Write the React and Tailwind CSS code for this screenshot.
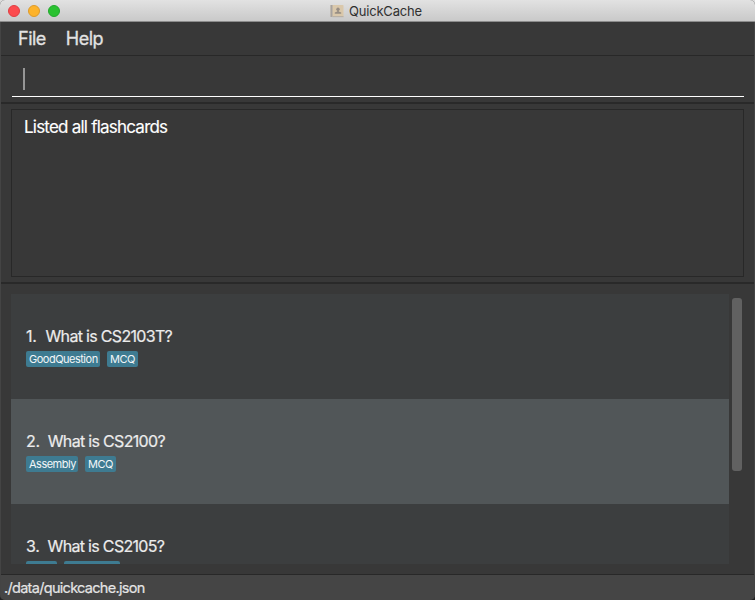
const cards = [
  { id: 1, question: 'What is CS2103T?', tags: ['GoodQuestion', 'MCQ'] },
  { id: 2, question: 'What is CS2100?', tags: ['Assembly', 'MCQ'], selected: true },
  { id: 3, question: 'What is CS2105?', tags: [] },
];

function TitleBar() {
  return (
    <header className="flex h-[22px] shrink-0 items-center border-b border-[#8c8c8c] bg-linear-to-b from-[#e2e2e2] to-[#c9c9c9] px-2">
      <div className="flex w-[322px] gap-2">
        <span className="size-3 rounded-full border border-[#df3e42] bg-[#fc4b4e]" />
        <span className="size-3 rounded-full border border-[#dd9a2a] bg-[#fdb32b]" />
        <span className="size-3 rounded-full border border-[#22a82d] bg-[#2ac231]" />
      </div>
      <svg width="14" height="14" viewBox="0 0 14 14" className="shrink-0">
        <rect x="0.5" y="1" width="13" height="12" rx="0.8" fill="#dac8ab" />
        <rect x="0.5" y="1" width="2" height="12" fill="#a8a3a0" />
        <rect x="2.5" y="12" width="11" height="1.2" fill="#b9b1a6" />
        <circle cx="8" cy="5.2" r="1.7" fill="#988e84" />
        <path d="M4.8 9.8V8.4L7.2 7.6V6.2H8.8V7.6L11.2 8.4V9.8Z" fill="#988e84" />
      </svg>
      <span className="ml-[5px] whitespace-nowrap text-[13px] leading-5 tracking-[-0.2px] text-[#303030]">QuickCache</span>
    </header>
  );
}

function Card({ card }) {
  return (
    <li className={`h-[105px] shrink-0 px-[15px] pt-8 ${card.selected ? 'bg-[#515658]' : 'bg-[#3c3e3f]'}`}>
      <div
        className={`flex whitespace-nowrap text-[16px] leading-[21px] tracking-[-0.68px] text-[#ececec] [-webkit-text-stroke:0.2px_#ececec] ${
          card.id === 1 ? 'gap-[9px]' : 'gap-2'
        }`}
      >
        <span className="tracking-[-0.3px]">{card.id}.</span>
        <span>{card.question}</span>
      </div>
      <div className="mt-1 flex gap-[7px]">
        {card.tags.map((tag) => (
          <span
            key={tag}
            className={`h-4 rounded-[2px] bg-[#3e7b91] pl-[3px] text-[11px] leading-4 tracking-[-0.5px] text-[#f2f6f8] ${
              tag === 'GoodQuestion' ? 'w-[74px]' : tag === 'Assembly' ? 'w-[52px]' : 'w-[31px]'
            }`}
          >
            {tag}
          </span>
        ))}
        {card.tags.length === 0 && (
          <>
            <span className="h-4 w-[31px] rounded-[2px] bg-[#3e7b91]" />
            <span className="h-4 w-14 rounded-[2px] bg-[#3e7b91]" />
          </>
        )}
      </div>
    </li>
  );
}

export default function App() {
  return (
    <div className="h-[600px] w-[755px] bg-linear-to-b from-[#dddddd] from-50% to-[#222222] to-50% font-[Inter,'Liberation_Sans',sans-serif]">
      <div className="flex h-full flex-col overflow-hidden rounded-[5px] bg-[#383838]">
        <TitleBar />
        <div className="flex min-h-0 flex-1 flex-col border-x border-[#444444]">
          <nav className="flex h-[34px] shrink-0 gap-[20px] border-b border-[#282828] pl-[17px] text-[18px] leading-[34px] tracking-[-0.5px] text-[#e2e2e2] [-webkit-text-stroke:0.3px_#e2e2e2]">
            <span>File</span>
            <span>Help</span>
          </nav>
          <section className="h-12 shrink-0 border-b-2 border-[#292929] pl-[11px] pr-2.5">
            <div className="flex h-[41px] border-b border-white pl-[11px] pt-3">
              <span className="h-[22px] w-0.5 bg-[#969696]" />
            </div>
          </section>
          <section className="h-[180px] shrink-0 border-b-2 border-[#292929] px-2.5 pt-[5px]">
            <div className="h-[168px] border border-[#282828] px-3 pt-[7px] text-[17px] leading-[21px] tracking-[-0.78px] text-white [-webkit-text-stroke:0.15px_white]">
              Listed all flashcards
            </div>
          </section>
          <section className="flex min-h-0 flex-1 pl-2.5 pt-2.5">
            <ul className="flex h-[270px] w-[718px] shrink-0 flex-col overflow-hidden">
              {cards.map((card) => (
                <Card key={card.id} card={card} />
              ))}
            </ul>
            <div className="ml-[3px] mt-1 h-[173px] w-2.5 rounded-[3px] bg-[#616161]" />
          </section>
          <footer className="h-[26px] shrink-0 border-t border-[#282828] bg-[#454545] pl-[3px] text-[14.5px] leading-[26px] tracking-[-0.7px] text-[#e4e4e4] [-webkit-text-stroke:0.2px_#e4e4e4]">
            ./data/quickcache.json
          </footer>
        </div>
      </div>
    </div>
  );
}
